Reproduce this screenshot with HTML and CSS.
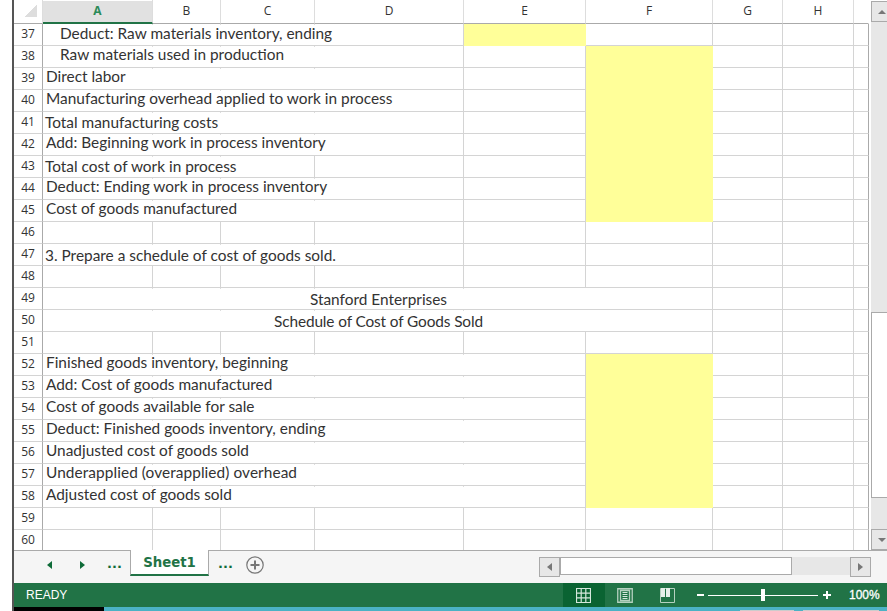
FILE: index.html
```html
<!DOCTYPE html>
<html lang="en">
<head>
    <meta charset="UTF-8">
    <meta name="viewport" content="width=device-width, initial-scale=1.0">
    <title>Sheet1</title>
    <link rel="stylesheet" href="styles.css">
</head>
<body>
<div class="window">
    <div class="workspace">
        <table class="sheet">
            <colgroup>
                <col class="col-num"><col class="col-a"><col class="col-b"><col class="col-c"><col class="col-d"><col class="col-e"><col class="col-f"><col class="col-g"><col class="col-h"><col class="col-i">
            </colgroup>
            <thead>
            <tr>
                <th><span class="corner"></span></th>
                <th class="active">A</th><th>B</th><th>C</th><th>D</th><th>E</th><th>F</th><th>G</th><th>H</th><th></th>
            </tr>
            </thead>
            <tbody>
            <tr><th>37</th><td colspan="4"><span class="text indent first-row">Deduct: Raw materials inventory, ending</span></td><td class="input"></td><td></td><td></td><td></td><td></td></tr>
            <tr><th>38</th><td colspan="4"><span class="text indent">Raw materials used in production</span></td><td></td><td class="input"></td><td></td><td></td><td></td></tr>
            <tr><th>39</th><td colspan="4"><span class="text">Direct labor</span></td><td></td><td class="input"></td><td></td><td></td><td></td></tr>
            <tr><th>40</th><td colspan="4"><span class="text">Manufacturing overhead applied to work in process</span></td><td></td><td class="input"></td><td></td><td></td><td></td></tr>
            <tr><th>41</th><td colspan="4"><span class="text down">Total manufacturing costs</span></td><td></td><td class="input"></td><td></td><td></td><td></td></tr>
            <tr><th>42</th><td colspan="4"><span class="text">Add: Beginning work in process inventory</span></td><td></td><td class="input"></td><td></td><td></td><td></td></tr>
            <tr><th>43</th><td colspan="3"><span class="text down">Total cost of work in process</span></td><td></td><td></td><td class="input"></td><td></td><td></td><td></td></tr>
            <tr><th>44</th><td colspan="4"><span class="text">Deduct: Ending work in process inventory</span></td><td></td><td class="input"></td><td></td><td></td><td></td></tr>
            <tr><th>45</th><td colspan="4"><span class="text">Cost of goods manufactured</span></td><td></td><td class="input"></td><td></td><td></td><td></td></tr>
            <tr><th>46</th><td></td><td></td><td></td><td></td><td></td><td></td><td></td><td></td><td></td></tr>
            <tr><th>47</th><td colspan="4"><span class="text low">3. Prepare a schedule of cost of goods sold.</span></td><td></td><td></td><td></td><td></td><td></td></tr>
            <tr><th>48</th><td></td><td></td><td></td><td></td><td></td><td></td><td></td><td></td><td></td></tr>
            <tr><th>49</th><td colspan="6" class="title"><span class="text low">Stanford Enterprises</span></td><td></td><td></td><td></td></tr>
            <tr><th>50</th><td colspan="6" class="title"><span class="text low tight">Schedule of Cost of Goods Sold</span></td><td></td><td></td><td></td></tr>
            <tr><th>51</th><td></td><td></td><td></td><td></td><td></td><td></td><td></td><td></td><td></td></tr>
            <tr><th>52</th><td colspan="5"><span class="text">Finished goods inventory, beginning</span></td><td class="input"></td><td></td><td></td><td></td></tr>
            <tr><th>53</th><td colspan="5"><span class="text">Add: Cost of goods manufactured</span></td><td class="input"></td><td></td><td></td><td></td></tr>
            <tr><th>54</th><td colspan="5"><span class="text">Cost of goods available for sale</span></td><td class="input"></td><td></td><td></td><td></td></tr>
            <tr><th>55</th><td colspan="5"><span class="text">Deduct: Finished goods inventory, ending</span></td><td class="input"></td><td></td><td></td><td></td></tr>
            <tr><th>56</th><td colspan="5"><span class="text">Unadjusted cost of goods sold</span></td><td class="input"></td><td></td><td></td><td></td></tr>
            <tr><th>57</th><td colspan="5"><span class="text wide">Underapplied (overapplied) overhead</span></td><td class="input"></td><td></td><td></td><td></td></tr>
            <tr><th>58</th><td colspan="5"><span class="text">Adjusted cost of goods sold</span></td><td class="input"></td><td></td><td></td><td></td></tr>
            <tr><th>59</th><td></td><td></td><td></td><td></td><td></td><td></td><td></td><td></td><td></td></tr>
            <tr><th>60</th><td></td><td></td><td></td><td></td><td></td><td></td><td></td><td></td><td></td></tr>
            </tbody>
        </table>
        <div class="vscroll">
            <div class="vbtn"><svg width="8" height="4"><path d="M0 4L4 0L8 4z" fill="#777"/></svg></div>
            <div class="vtrack"><div class="vthumb"></div></div>
            <div class="vbtn"><svg width="8" height="4"><path d="M0 0H8L4 4z" fill="#777"/></svg></div>
        </div>
    </div>
    <div class="tabs">
        <svg class="arrow" width="5" height="8"><path d="M5 0V8L0 4z" fill="#0e6b38"/></svg>
        <svg class="arrow next" width="5" height="8"><path d="M0 0V8L5 4z" fill="#0e6b38"/></svg>
        <span class="dots">...</span>
        <div class="tab">Sheet1</div>
        <span class="dots after">...</span>
        <svg class="add" width="18" height="18" viewBox="0 0 18 18"><circle cx="9" cy="9" r="8.2" fill="none" stroke="#777" stroke-width="1.2"/><path d="M9 4.5V13.5M4.5 9H13.5" stroke="#777" stroke-width="2"/></svg>
        <div class="hscroll">
            <div class="hbtn"><svg width="5" height="8"><path d="M5 0V8L0 4z" fill="#777"/></svg></div>
            <div class="htrack"><div class="hthumb"></div></div>
            <div class="hbtn"><svg width="5" height="8"><path d="M0 0V8L5 4z" fill="#777"/></svg></div>
        </div>
    </div>
    <div class="status">
        <span class="ready">READY</span>
        <div class="view on"><svg width="15" height="15"><path d="M0 .5H15M0 5.2H15M0 9.8H15M0 14.5H15M.5 0V15M5.2 0V15M9.8 0V15M14.5 0V15" stroke="#d5e7dc" stroke-width="1.2"/></svg></div>
        <div class="view"><svg width="16" height="15"><path d="M.75 .75H15.25V14.25H.75zM3.5 2.5H12.5V12.5H3.5z" fill="none" stroke="#b5d1c0" stroke-width="1.3"/><path d="M5.500 4.500H10.500M5.500 6.500H10.500M5.500 8.500H10.500M5.500 10.500H10.500" stroke="#d5e7dc"/></svg></div>
        <div class="view"><svg width="15" height="15"><path d="M.5 .5H14.5V14.5H.5z" fill="none" stroke="#b5d1c0"/><path d="M1 0H5V9H1zM6 0H10V9H6z" fill="#e6f0ea"/></svg></div>
        <div class="zoom">
            <svg width="135" height="12"><path d="M0 5H7V7H0zM11 6H121V7H11zM64 0H68V12H64zM126 5H134V7H126zM129 2H131V10H129z" fill="#fff"/></svg>
        </div>
        <span class="percent">100%</span>
    </div>
    <div class="taskbar">
        <div class="start"></div>
        <div class="item first"></div>
        <div class="item"></div>
    </div>
</div>
</body>
</html>
```

FILE: styles.css
```css
body {
    margin: 0;
    background-color: #fff;
    font-family: Lato, "Liberation Sans", sans-serif;
    color: #333;
    overflow: hidden;
}

.window {
    box-sizing: border-box;
    width: 887px;
    height: 611px;
    padding-left: 14px;
    background: linear-gradient(to right, #fff 12px, #555 12px, #555 14px, #fff 14px);
    display: flex;
    flex-direction: column;
}

.workspace {
    height: 550px;
    display: flex;
    justify-content: space-between;
    overflow: hidden;
}

.sheet {
    width: 855px;
    table-layout: fixed;
    border-collapse: separate;
    border-spacing: 0;
    flex: none;
    align-self: flex-start;
}

.col-num { width: 29px; }
.col-a { width: 110px; }
.col-b { width: 68px; }
.col-c { width: 94px; }
.col-d { width: 149px; }
.col-e { width: 122px; }
.col-f { width: 127px; }
.col-g { width: 70px; }
.col-h { width: 71px; }
.col-i { width: 15px; }

th, td {
    box-sizing: border-box;
    height: 22px;
    padding: 0;
    border-right: 1px solid #d4d4d4;
    border-bottom: 1px solid #d4d4d4;
    font-weight: normal;
    line-height: 20px;
    white-space: nowrap;
    overflow: hidden;
}

thead th {
    height: 24px;
    padding-bottom: 2px;
    border-bottom-color: #aaa;
    border-right-color: #ddd;
    font-family: "Open Sans", sans-serif;
    font-size: 12px;
}

thead th:last-child {
    border-right-color: #fff;
}

thead .active {
    padding-bottom: 0;
    background: linear-gradient(#fff 1px, #e1e1e1 1px);
    border-bottom: 2px solid #217346;
    color: #2b8a58;
    font-weight: bold;
}

tbody th {
    padding-bottom: 2px;
    line-height: 18px;
    border-right-color: #aaa;
    font-family: "Open Sans", sans-serif;
    font-size: 12px;
}

td:last-child {
    border-right-color: #aaa;
}

.corner {
    display: block;
    margin: 0 0 0 11px;
    width: 12px;
    height: 12px;
    background: linear-gradient(to bottom right, transparent 50%, #ddd 50%);
}

/* short ticks show where the column lines pass under spilled text */
.text {
    display: block;
    height: 21px;
    padding-left: 3px;
    font-size: 15.4px;
    line-height: 17px;
    text-align: left;
    background-image: linear-gradient(#ddd, #ddd), linear-gradient(#ddd, #ddd), linear-gradient(#ddd, #ddd), linear-gradient(#ddd, #ddd);
    background-size: 1px 1px;
    background-repeat: no-repeat;
    background-position: 109px 0, 177px 0, 271px 0, 420px 0;
}

.indent { padding-left: 17px; }
.first-row { line-height: 19px; }
.down { padding-left: 2px; line-height: 20px; }
.low { padding-left: 2px; line-height: 23px; }
.tight { letter-spacing: -0.12px; }
.wide { letter-spacing: 0.08px; }

.title .text {
    padding: 0 0 0 2px;
    text-align: center;
}

.input {
    background-color: #ff9;
    border-color: #ff9;
}

.vscroll {
    width: 16px;
    display: flex;
    flex-direction: column;
    background-color: #e7e7e7;
    margin-top: 1px;
}

.vbtn {
    box-sizing: border-box;
    height: 21px;
    border: 1px solid #aaa;
    border-right: 0;
    display: flex;
    align-items: center;
    justify-content: center;
    padding-left: 5px;
}

.vtrack {
    flex: 1;
    padding-top: 290px;
}

.vthumb {
    box-sizing: border-box;
    height: 186px;
    border: 1px solid #aaa;
    border-right: 0;
    background-color: #fff;
}

.tabs {
    box-sizing: border-box;
    height: 33px;
    background: linear-gradient(#aaa 1px, #f5f5f5 1px);
    display: flex;
    align-items: flex-start;
    padding-left: 33px;
    color: #0e6b38;
    font-family: "DejaVu Sans", sans-serif;
    font-size: 13px;
    font-weight: bold;
}

.arrow { margin-top: 11px; }
.next { margin-left: 28px; }

.dots {
    width: 16px;
    margin: 6px 7px 0 22px;
}

.tab {
    box-sizing: border-box;
    width: 79px;
    height: 26px;
    border: 1px solid #aaa;
    border-top: 0;
    border-bottom: 2px solid #217346;
    background-color: #fff;
    color: #217346;
    text-align: center;
    font-size: 13.3px;
    line-height: 26px;
}

.after { margin: 6px 12px 0 9px; }
.add { margin-top: 6px; }

.hscroll {
    width: 332px;
    height: 20px;
    margin: 7px 16px 0 auto;
    display: flex;
}

.hbtn {
    box-sizing: border-box;
    width: 21px;
    height: 20px;
    border: 1px solid #aaa;
    background-color: #e7e7e7;
    display: flex;
    align-items: center;
    justify-content: center;
}

.htrack {
    flex: 1;
    height: 18px;
    background-color: #e7e7e7;
}

.hthumb {
    box-sizing: border-box;
    width: 232px;
    height: 18px;
    border: 1px solid #aaa;
    background-color: #fff;
}

.status {
    height: 24px;
    background-color: #217346;
    color: #fff;
    display: flex;
    align-items: center;
    font-family: "Liberation Sans", sans-serif;
    font-size: 12px;
}

.ready {
    width: 537px;
    padding-left: 12px;
}

.view {
    width: 42px;
    height: 24px;
    display: flex;
    align-items: center;
    justify-content: center;
    padding-right: 2px;
    box-sizing: border-box;
}

.on { background-color: #0a6332; }

.zoom {
    width: 160px;
    padding-left: 8px;
    box-sizing: border-box;
    height: 12px;
    display: flex;
}

.percent {
    width: 32px;
    -webkit-text-stroke: 0.3px #fff;
}

.taskbar {
    height: 4px;
    background-color: #4bb2c5;
    display: flex;
    align-items: flex-end;
}

.start {
    width: 90px;
    height: 4px;
    background-color: #000;
}

.item {
    width: 76px;
    height: 1px;
    background-color: #ccc;
    margin-left: 9px;
}

.first {
    width: 54px;
    margin-left: 636px;
}
```
